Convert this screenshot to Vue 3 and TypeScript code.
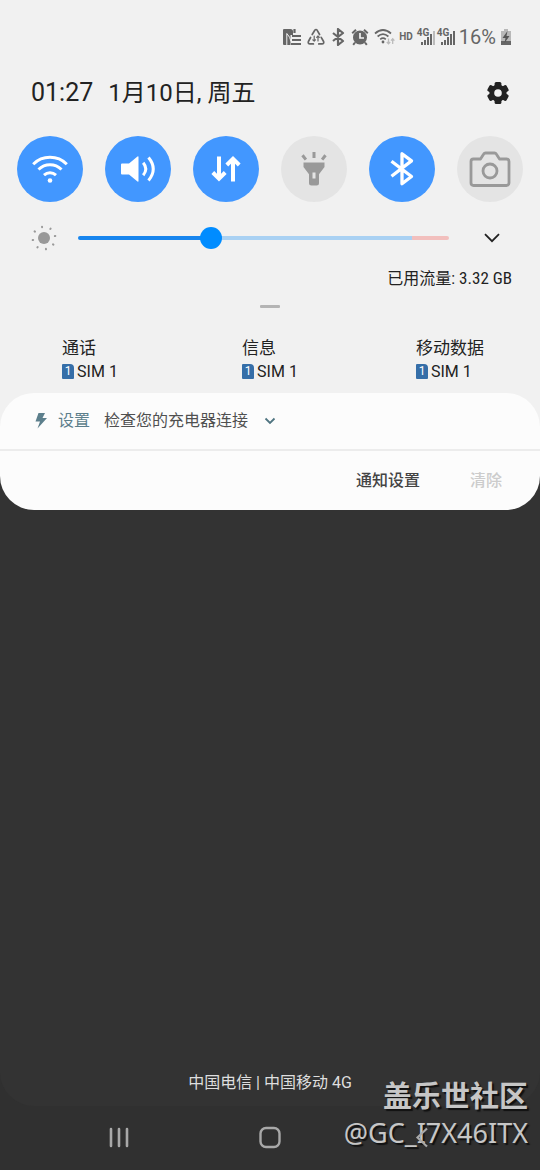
<script setup lang="ts">
import { ref, computed } from 'vue'

interface Tile {
  id: string
  label: string
  on: boolean
}

interface SimSlot {
  name: string
  sim: string
}

const tiles = ref<Tile[]>([
  { id: 'wifi', label: 'WLAN', on: true },
  { id: 'sound', label: '声音', on: true },
  { id: 'data', label: '移动数据', on: true },
  { id: 'torch', label: '手电筒', on: false },
  { id: 'bluetooth', label: '蓝牙', on: true },
  { id: 'camera', label: '相机', on: false },
])

const slots: SimSlot[] = [
  { name: '通话', sim: 'SIM 1' },
  { name: '信息', sim: 'SIM 1' },
  { name: '移动数据', sim: 'SIM 1' },
]

const brightness = ref(35)
const fill = computed(() => `${brightness.value}%`)
const rays = [8, 53, 98, 143, 188, 233, 278, 323]
</script>

<template>
  <div class="screen">
    <div class="quick-panel">
      <header class="status">
        <span class="indicators">
          <svg width="20" height="18" viewBox="0 0 20 18" aria-hidden="true">
            <path d="M2 1h6.500q2.500 0 2.500 2.500V7H8.500V17H2a1 1 0 0 1-1-1V2a1 1 0 0 1 1-1z" fill="#666" />
            <path d="M4.800 17V5.500q3.500 3.500 4.200 8" fill="none" stroke="#f1f1f1" stroke-width="1" />
            <path d="M12.500 1v4M10 8h9M10 12h9M9 16h10" fill="none" stroke="#666" stroke-width="2.200" />
          </svg>
          <svg width="18" height="18" viewBox="0 0 18 18" fill="none" stroke="#666" stroke-width="1.700" stroke-linecap="round" stroke-linejoin="round" aria-hidden="true">
            <path d="M5.200 6.500 7.800 2.300q1.200-1.600 2.400 0l2.400 4.200M14.200 9.300l2.400 4.200q.7 2.200-1.600 2.400h-3.200M6.400 15.900H3q-2.300-.2-1.600-2.400l2.200-4" />
            <path d="M7.200 8v5M5.800 11.800l1.400 1.400 1.200-1.400M11 13V8M9.700 9.300 11 8l1.300 1.300" stroke-width="1.200" />
          </svg>
          <svg width="16" height="18" viewBox="0 0 16 18" fill="none" stroke="#666" stroke-width="2.200" aria-hidden="true">
            <path d="M3 5l10 8-5 4V1l5 4-10 8" stroke-linejoin="round" />
          </svg>
          <svg width="18" height="18" viewBox="0 0 18 18" aria-hidden="true">
            <circle cx="9" cy="9.500" r="7" fill="#666" />
            <path d="M1.200 5.200 5 1.800M16.800 5.200 13 1.800M4 14.500l-1.800 2.300M14 14.500l1.800 2.300" stroke="#666" stroke-width="2" />
            <path d="M9 5v5h4" fill="none" stroke="#f1f1f1" stroke-width="1.700" />
          </svg>
          <svg width="21" height="18" viewBox="0 0 21 18" fill="none" stroke="#666" stroke-width="1.700" aria-hidden="true">
            <path d="M1 5.500q8-7 16 0M3.600 8.500q5.400-4.600 10.800 0M6.200 11.300q2.800-2.300 5.600 0" />
            <circle cx="9" cy="14" r="1.400" fill="#666" stroke="none" />
            <path d="M14.500 10.500v5M12.800 14l1.700 1.800 1.700-1.800M18.700 16v-5M17 12.600l1.700-1.800 1.700 1.800" stroke="#bbb" stroke-width="1.300" />
          </svg>
        </span>
        <span class="hd">HD</span>
        <span class="signals">
          <span v-for="n in 2" :key="n" class="signal">
            <svg width="18" height="18" viewBox="0 0 18 18" aria-hidden="true">
              <path d="M4 14h2v3H4zM7 12h2v5H7zM10 9h2v8h-2zM13 6h2v11h-2z" fill="#666" />
              <path d="M16 3h2v14h-2z" :fill="n === 1 ? '#bbb' : '#666'" />
            </svg>
            <span class="gen">4G</span>
          </span>
        </span>
        <span class="percent">16%</span>
        <svg width="12" height="18" viewBox="0 0 12 18" aria-hidden="true">
          <path d="M4 1h4v2h3v10H1V3h3z" fill="#b8b8b8" />
          <path d="M1 13h10v4H1z" fill="#666" />
          <path d="M7.500 3 2.500 10h3L4.500 15l5-7h-3z" fill="#555" />
        </svg>
      </header>

      <div class="headline">
        <time class="clock">01:27</time>
        <time class="date">1月10日, 周五</time>
        <button class="plain gear" type="button" aria-label="设置">
          <svg width="24" height="24" viewBox="0 0 24 24" fill="#222" aria-hidden="true">
            <circle cx="12" cy="12" r="8.600" />
            <rect v-for="a in [0, 60, 120]" :key="a" x="8.600" y="1" width="6.800" height="22" rx="1.500" :transform="`rotate(${a} 12 12)`" />
            <circle cx="12" cy="12" r="3.800" fill="#f1f1f1" />
          </svg>
        </button>
      </div>

      <div class="tiles">
        <button v-for="t in tiles" :key="t.id" type="button" class="tile" :class="{ on: t.on }" :aria-label="t.label" :aria-pressed="t.on" @click="t.on = !t.on">
          <svg v-if="t.id === 'wifi'" viewBox="0 0 44 44" fill="none" stroke="currentColor" stroke-width="3">
            <path d="M5.200 17.200C14.500 8 29.500 8 38.800 17.200M10.500 22.500C17 16 27 16 33.500 22.500M16 28.200C19.500 25 24.500 25 28 28.200" />
            <circle cx="22" cy="33.500" r="2.300" fill="currentColor" stroke="none" />
          </svg>
          <svg v-else-if="t.id === 'sound'" viewBox="0 0 44 44" fill="none" stroke="currentColor" stroke-width="3">
            <path d="M6 16.500h7L21.500 9.500Q22.500 9 22.500 10v24Q22.500 35 21.500 34.500L13 27.500H6Q5 27.500 5 26.500v-9Q5 16.500 6 16.500z" fill="currentColor" stroke="none" />
            <path d="M27.200 15.800q5.200 6.200 0 12.400M32.500 10.500q9.500 11.500 0 23" />
          </svg>
          <svg v-else-if="t.id === 'data'" viewBox="0 0 44 44" fill="none" stroke="currentColor" stroke-width="4">
            <path d="M15 9.500v21M8.800 25.500l6.200 6.200 6.200-6.200M29 34.500v-22M22.800 18l6.200-6.200 6.200 6.200" />
          </svg>
          <svg v-else-if="t.id === 'torch'" viewBox="0 0 44 44" fill="currentColor">
            <path d="M11.500 15.500h21v4.500L27 27.200V36q0 2.500-2.500 2.500h-5Q17 38.500 17 36v-8.800L11.500 20z" />
            <path d="M20.500 25.500h3v6h-3z" fill="#e4e4e4" />
            <path d="M20.500 5h3v6h-3z" />
            <path d="m10.500 8.300 3.400 4.300M33.500 8.300l-3.400 4.300" stroke="currentColor" stroke-width="3" />
          </svg>
          <svg v-else-if="t.id === 'bluetooth'" viewBox="0 0 44 44" fill="none" stroke="currentColor" stroke-width="3.300" stroke-linejoin="round">
            <path d="M11.500 14.200 31.500 29.500 22 36.700V6.700l9.500 7.200L11.500 29.200" />
          </svg>
          <svg v-else viewBox="0 0 44 44" fill="none" stroke="currentColor" stroke-width="2.800" stroke-linejoin="round">
            <path d="M5.500 12h7l3.200-5q.6-1 1.800-1h9q1.200 0 1.800 1l3.200 5h7q2.500 0 2.500 2.500v21.500q0 2.500-2.500 2.500h-33Q3 38.500 3 36V14.500q0-2.500 2.500-2.500z" />
            <circle cx="22" cy="24" r="7" />
          </svg>
        </button>
      </div>

      <div class="brightness">
        <svg width="28" height="28" viewBox="0 0 28 28" fill="#999" aria-hidden="true">
          <circle cx="14" cy="14" r="6" />
          <rect v-for="a in rays" :key="a" x="13" y="1.500" width="2" height="2.500" rx="1" :transform="`rotate(${a - 18} 14 14)`" />
        </svg>
        <input v-model.number="brightness" class="slider" type="range" min="0" max="100" aria-label="亮度" :style="{ '--fill': fill }" />
        <button class="plain" type="button" aria-label="展开">
          <svg width="16" height="10" viewBox="0 0 16 10" fill="none" stroke="#222" stroke-width="1.800" aria-hidden="true">
            <path d="m1 1.200 7 7 7-7" />
          </svg>
        </button>
      </div>

      <p class="usage">已用流量: <span class="amount">3.32 GB</span></p>
      <div class="handle"></div>

      <div class="slots">
        <button v-for="s in slots" :key="s.name" class="plain slot" type="button">
          <span class="slot-name">{{ s.name }}</span>
          <span class="slot-sim"><span class="chip">1</span>{{ s.sim }}</span>
        </button>
      </div>
    </div>

    <main class="shade">
      <div class="card-wrap">
        <section class="card">
          <div class="notice">
            <svg width="14" height="16" viewBox="0 0 14 16" fill="#5c7f8c" aria-hidden="true">
              <path d="M4.500 0H11L8.500 5H13L3.500 15.500 6 8.500H1.500z" />
            </svg>
            <span class="app">设置</span>
            <span class="message">检查您的充电器连接</span>
            <svg width="12" height="8" viewBox="0 0 12 8" fill="none" stroke="#4f7480" stroke-width="1.800" aria-hidden="true">
              <path d="m1.500 1.500 4.500 4.500 4.500-4.500" />
            </svg>
          </div>
          <div class="actions">
            <button class="plain" type="button">通知设置</button>
            <button class="plain clear" type="button" disabled>清除</button>
          </div>
        </section>
      </div>
      <p class="carrier">中国电信 | 中国移动 4G</p>
    </main>

    <nav class="nav">
      <button class="plain" type="button" aria-label="最近">
        <svg width="24" height="24" viewBox="0 0 24 24" stroke="#a8a8a8" stroke-width="2.600" stroke-linecap="round"><path d="M4 3v17M12 3v17M20 3v17" /></svg>
      </button>
      <button class="plain" type="button" aria-label="主页">
        <svg width="24" height="24" viewBox="0 0 24 24" fill="none" stroke="#a8a8a8" stroke-width="2.400"><rect x="2.500" y="2" width="19" height="19" rx="5.500" /></svg>
      </button>
      <button class="plain" type="button" aria-label="返回">
        <svg width="24" height="24" viewBox="0 0 24 24" fill="none" stroke="#a8a8a8" stroke-width="2.200"><path d="M18 2.500 8.500 11.500l9.500 9" /></svg>
      </button>
    </nav>

    <div class="signature">
      <span class="community">盖乐世社区</span>
      <span class="handle-name">@GC_I7X46ITX</span>
    </div>
  </div>
</template>

<style>
body {
  background: #303030;
}
</style>

<style scoped>
.screen {
  position: relative;
  display: flex;
  flex-direction: column;
  min-height: 100vh;
  background: #303030;
  color: #222;
  font-family: Roboto, "Noto Sans CJK SC", sans-serif;
}
.screen svg {
  display: block;
  flex: none;
}
.plain {
  padding: 0;
  border: 0;
  background: none;
  color: inherit;
  font: inherit;
}
.quick-panel {
  background: #f1f1f1;
}
.status {
  display: flex;
  align-items: center;
  justify-content: flex-end;
  gap: 4px;
  height: 26px;
  padding: 24px 28px 0;
  color: #666;
}
.indicators {
  display: flex;
  gap: 5px;
}
.hd {
  font-size: 10px;
  font-weight: 700;
  line-height: 16px;
}
.signals {
  display: flex;
  gap: 2px;
}
.signal {
  position: relative;
}
.gen {
  position: absolute;
  top: 0;
  left: 0;
  padding-right: 1px;
  background: #f1f1f1;
  font-size: 10px;
  font-weight: 700;
  line-height: 9px;
}
.percent {
  font-size: 20px;
  line-height: 24px;
}
.headline {
  display: flex;
  align-items: center;
  height: 36px;
  padding: 25px 30px 0 31px;
  line-height: 36px;
}
.clock {
  font-size: 25px;
}
.date {
  margin-left: 15px;
  font-size: 24px;
}
.gear {
  margin-left: auto;
}
.tiles {
  display: flex;
  justify-content: space-between;
  padding: 25px 17px 0;
}
.tile {
  display: grid;
  place-items: center;
  width: 66px;
  height: 66px;
  padding: 0;
  border: 0;
  border-radius: 50%;
  background: #e4e4e4;
  color: #999;
}
.tile.on {
  background: #4297ff;
  color: #fff;
}
.tile svg {
  width: 44px;
  height: 44px;
}
.brightness {
  display: flex;
  align-items: center;
  height: 28px;
  padding: 22px 40px 0 30px;
}
.slider {
  flex: 1;
  min-width: 0;
  height: 22px;
  margin: 0 35px 0 20px;
  appearance: none;
  background: none;
}
.slider::-webkit-slider-runnable-track {
  height: 4px;
  border-radius: 2px;
  background: linear-gradient(90deg, #1785ee var(--fill), #a9d1f3 var(--fill) 90%, #f2bfbd 90%);
}
.slider::-webkit-slider-thumb {
  appearance: none;
  width: 22px;
  height: 22px;
  margin-top: -9px;
  border-radius: 50%;
  background: #008cff;
}
.usage {
  margin: 14px 28px 0;
  text-align: right;
  font-size: 16px;
  line-height: 24px;
}
.amount {
  font-family: "Roboto Condensed", Roboto, sans-serif;
  font-size: 17px;
}
.handle {
  width: 20px;
  height: 3px;
  margin: 14px auto 0;
  border-radius: 1px;
  background: #b4b4b4;
}
.slots {
  display: grid;
  grid-template-columns: repeat(3, 1fr);
  justify-items: center;
  padding: 28px 0 9px;
}
.slot {
  display: flex;
  flex-direction: column;
  text-align: left;
}
.slot-name {
  font-size: 17px;
  line-height: 24px;
}
.slot-sim {
  display: flex;
  align-items: center;
  gap: 3px;
  font-size: 16px;
  line-height: 24px;
}
.chip {
  width: 12px;
  height: 15px;
  margin-bottom: 2px;
  border-radius: 1px 4px 1px 1px;
  background: #356ea8;
  color: #fff;
  text-align: center;
  font-size: 12px;
  line-height: 15px;
}
.shade {
  display: flex;
  flex: 1;
  flex-direction: column;
  border-radius: 0 0 34px 34px;
  background: #333;
}
.card-wrap {
  background: linear-gradient(#f1f1f1 50%, #333 50%);
}
.card {
  overflow: hidden;
  border-radius: 34px;
  background: #fcfcfc;
}
.notice {
  display: flex;
  align-items: center;
  height: 56px;
  padding: 0 34px;
  border-bottom: 2px solid #ececec;
  font-size: 16px;
  line-height: 24px;
}
.app {
  margin: 0 14px 0 10px;
  color: #5c7f8c;
}
.message {
  margin-right: 16px;
  color: #505050;
}
.actions {
  display: flex;
  align-items: center;
  justify-content: flex-end;
  gap: 50px;
  height: 56px;
  padding: 0 38px 3px;
  color: #444;
  font-size: 16px;
  font-weight: 500;
}
.clear {
  color: #ccc;
}
.carrier {
  margin: auto 0 11px;
  color: #dedede;
  text-align: center;
  font-size: 16px;
  line-height: 24px;
}
.nav {
  position: relative;
  z-index: 1;
  display: flex;
  align-items: center;
  justify-content: center;
  gap: 127px;
  height: 64px;
}
.signature {
  position: absolute;
  right: 12px;
  bottom: 19px;
  display: flex;
  flex-direction: column;
  gap: 2px;
  align-items: flex-end;
  color: #c6c6c6;
  text-shadow: 2px 2px 1px #111;
  pointer-events: none;
}
.community {
  font-family: "Noto Sans CJK SC", sans-serif;
  font-size: 29px;
  font-weight: 700;
  line-height: 38px;
}
.handle-name {
  font-family: "Noto Sans", sans-serif;
  font-size: 27px;
  line-height: 36px;
}
</style>
